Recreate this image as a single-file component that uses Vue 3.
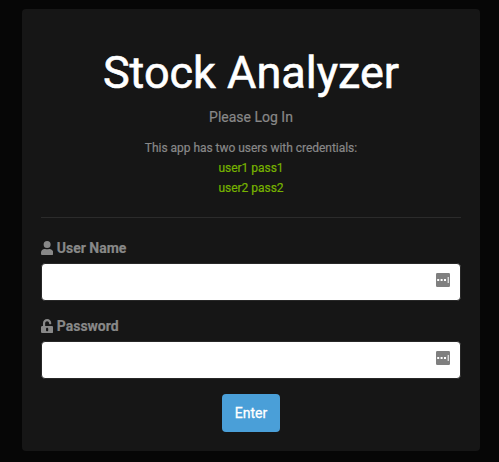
<script setup>
import { ref } from 'vue'

const userName = ref('')
const password = ref('')
const credentials = ['user1 pass1', 'user2 pass2']
</script>

<template>
  <main class="page">
    <section class="card">
      <header class="intro">
        <h1 class="title">Stock Analyzer</h1>
        <p class="lead">Please Log In</p>
        <p class="hint">This app has two users with credentials:</p>
        <p v-for="item in credentials" :key="item" class="hint credential">{{ item }}</p>
      </header>
      <hr class="rule" />
      <form class="form" @submit.prevent>
        <label class="label" for="user">
          <svg class="icon" viewBox="0 0 448 512">
            <path d="M224 256a128 128 0 1 0 0-256 128 128 0 0 0 0 256zm90 32h-17a174 174 0 0 1-146 0h-17C60 288 0 348 0 422v42c0 27 21 48 48 48h352c27 0 48-21 48-48v-42c0-74-60-134-134-134z" />
          </svg>
          <span>User Name</span>
        </label>
        <div class="field">
          <input id="user" v-model="userName" class="input" type="text" />
          <svg class="manager" viewBox="0 0 14 14">
            <rect width="14" height="14" rx="1.2" fill="#7f7f7f" />
            <path d="M1.2 6h2v2h-2zM4.6 6h2v2h-2zM8 6h2v2H8zM11.7 4h1v6h-1z" fill="#fff" />
          </svg>
        </div>
        <label class="label" for="pass">
          <svg class="icon" viewBox="0 0 448 512">
            <path fill-rule="evenodd" d="M400 256H152v-105c0-40 31-72 71-73 40 0 73 33 73 73v17c0 13 11 24 24 24h32c13 0 24-11 24-24v-17C376 67 307-1 223 0 139 0 72 70 72 154v102H48c-27 0-48 21-48 48v160c0 27 21 48 48 48h352c27 0 48-21 48-48V304c0-27-21-48-48-48zM264 408c0 22-18 40-40 40s-40-18-40-40v-48c0-22 18-40 40-40s40 18 40 40z" />
          </svg>
          <span>Password</span>
        </label>
        <div class="field">
          <input id="pass" v-model="password" class="input" type="password" />
          <svg class="manager" viewBox="0 0 14 14">
            <rect width="14" height="14" rx="1.2" fill="#7f7f7f" />
            <path d="M1.2 6h2v2h-2zM4.6 6h2v2h-2zM8 6h2v2H8zM11.7 4h1v6h-1z" fill="#fff" />
          </svg>
        </div>
        <button class="submit" type="submit">Enter</button>
      </form>
    </section>
  </main>
</template>

<style>
body {
  margin: 0;
  background: #060606;
}
</style>

<style scoped>
.page {
  box-sizing: border-box;
  height: 462px;
  padding: 9px 19px 11px 22px;
  font-family: Roboto, "Liberation Sans", sans-serif;
  color: #888;
  overflow: hidden;
}
.card {
  box-sizing: border-box;
  height: 442px;
  padding: 36px 19px 19px;
  background: #161616;
  border-radius: 4px;
}
.intro {
  text-align: center;
}
.title {
  margin: 0;
  font-size: 45px;
  line-height: 56px;
  font-weight: 400;
  color: #fff;
  -webkit-text-stroke: 0.6px #fff;
}
.lead {
  margin: 6px 0 10px;
  font-size: 14px;
  line-height: 21px;
  -webkit-text-stroke: 0.2px currentColor;
}
.hint {
  margin: 0;
  font-size: 12px;
  line-height: 20px;
  letter-spacing: -0.03px;
  -webkit-text-stroke: 0.2px currentColor;
}
.credential {
  color: #77b300;
}
.rule {
  height: 1px;
  margin: 19px 0;
  border: 0;
  background: #2b2b2b;
}
.form {
  display: flex;
  flex-direction: column;
}
.label {
  display: flex;
  align-items: center;
  gap: 3.5px;
  height: 21px;
  margin-bottom: 5px;
  font-size: 14px;
  font-weight: 700;
  -webkit-text-stroke: 0.2px currentColor;
}
.icon {
  width: 12.25px;
  height: 14px;
  fill: currentColor;
}
.field {
  position: relative;
  height: 38px;
  margin-bottom: 14px;
}
.input {
  box-sizing: border-box;
  display: block;
  width: 100%;
  height: 38px;
  padding: 6px 12px;
  border: 1px solid #282828;
  border-radius: 4px;
  background: #fff;
  font: inherit;
  outline: 0;
}
.manager {
  position: absolute;
  top: 10px;
  right: 11px;
  width: 14px;
  height: 14px;
}
.submit {
  align-self: center;
  width: 58px;
  height: 38px;
  margin-top: 1px;
  padding: 0;
  border: 0;
  border-radius: 4px;
  background: #4a9fd8;
  color: #fff;
  font: 400 14px/21px Roboto, "Liberation Sans", sans-serif;
  -webkit-text-stroke: 0.3px #fff;
}
</style>
